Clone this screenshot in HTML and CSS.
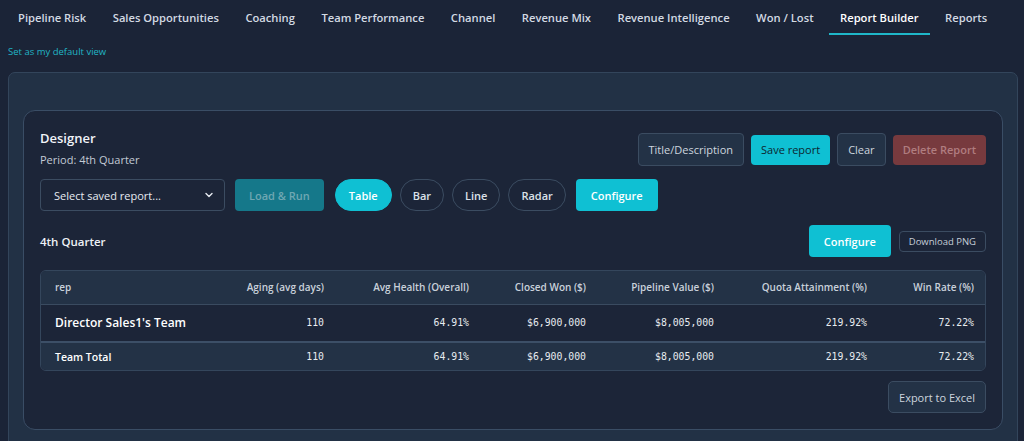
FILE: index.html
```html
<!DOCTYPE html>
<html lang="en">
<head>
    <meta charset="UTF-8">
    <meta name="viewport" content="width=device-width, initial-scale=1.0">
    <title>Report Builder</title>
    <link rel="stylesheet" href="styles.css">
</head>
<body>
    <!-- Top tabs -->
    <nav class="tabs">
        <a href="#" class="tab">Pipeline Risk</a>
        <a href="#" class="tab">Sales Opportunities</a>
        <a href="#" class="tab">Coaching</a>
        <a href="#" class="tab">Team Performance</a>
        <a href="#" class="tab">Channel</a>
        <a href="#" class="tab">Revenue Mix</a>
        <a href="#" class="tab">Revenue Intelligence</a>
        <a href="#" class="tab">Won / Lost</a>
        <a href="#" class="tab active">Report Builder</a>
        <a href="#" class="tab">Reports</a>
    </nav>

    <a href="#" class="default-link">Set as my default view</a>

    <div class="panel">
        <div class="designer">
            <!-- Header -->
            <div class="designer-head">
                <div>
                    <h2 class="designer-title">Designer</h2>
                    <p class="period">Period: 4th Quarter</p>
                </div>
                <div class="head-actions">
                    <button class="btn btn-ghost btn-tall">Title/Description</button>
                    <button class="btn btn-teal btn-dark-text">Save report</button>
                    <button class="btn btn-ghost btn-tall">Clear</button>
                    <button class="btn btn-danger">Delete Report</button>
                </div>
            </div>

            <!-- Toolbar -->
            <div class="toolbar">
                <div class="select">
                    <span>Select saved report...</span>
                    <svg width="10" height="10" viewBox="0 0 10 10"><path d="M2 3.5 L5 6.5 L8 3.5" fill="none" stroke="#e6ebf1" stroke-width="1.4" stroke-linecap="round" stroke-linejoin="round"/></svg>
                </div>
                <button class="btn btn-disabled">Load &amp; Run</button>
                <button class="pill active">Table</button>
                <button class="pill">Bar</button>
                <button class="pill">Line</button>
                <button class="pill">Radar</button>
                <button class="btn btn-teal">Configure</button>
            </div>

            <!-- Report -->
            <div class="report-head">
                <h3 class="report-title">4th Quarter</h3>
                <div class="report-actions">
                    <button class="btn btn-teal">Configure</button>
                    <button class="btn btn-small">Download PNG</button>
                </div>
            </div>

            <div class="table-wrap">
                <table class="report-table">
                    <colgroup>
                        <col style="width:170px">
                        <col style="width:127px">
                        <col style="width:145px">
                        <col style="width:117px">
                        <col style="width:128px">
                        <col style="width:153px">
                        <col style="width:107px">
                    </colgroup>
                    <thead>
                        <tr>
                            <th class="left">rep</th>
                            <th>Aging (avg days)</th>
                            <th>Avg Health (Overall)</th>
                            <th>Closed Won ($)</th>
                            <th>Pipeline Value ($)</th>
                            <th>Quota Attainment (%)</th>
                            <th>Win Rate (%)</th>
                        </tr>
                    </thead>
                    <tbody>
                        <tr class="data-row">
                            <td class="name">Director Sales1's Team</td>
                            <td>110</td>
                            <td>64.91%</td>
                            <td>$6,900,000</td>
                            <td>$8,005,000</td>
                            <td>219.92%</td>
                            <td>72.22%</td>
                        </tr>
                        <tr class="total-row">
                            <td class="name">Team Total</td>
                            <td>110</td>
                            <td>64.91%</td>
                            <td>$6,900,000</td>
                            <td>$8,005,000</td>
                            <td>219.92%</td>
                            <td>72.22%</td>
                        </tr>
                    </tbody>
                </table>
            </div>

            <div class="footer-actions">
                <button class="btn btn-ghost btn-export">Export to Excel</button>
            </div>
        </div>
    </div>
</body>
</html>
```

FILE: styles.css
```css
/* Basic reset */
* {
    margin: 0;
    padding: 0;
    box-sizing: border-box;
}

body {
    font-family: 'Open Sans', 'Noto Sans', sans-serif;
    background-color: #1b2437;
    color: #e6ebf1;
    height: 441px;
    overflow: hidden;
}

/* Tabs */
.tabs {
    display: flex;
    gap: 4.5px;
    padding-left: 7px;
    height: 35px;
}

.tab {
    flex: none;
    white-space: nowrap;
    color: #d3dae3;
    text-decoration: none;
    font-size: 11.2px;
    font-weight: 600;
    padding: 10px 11px 0;
    height: 35px;
    border-bottom: 2px solid transparent;
}

.tab.active {
    color: #ffffff;
    border-bottom-color: #1fb7c9;
}

.default-link {
    display: block;
    margin: 10px 0 0 8px;
    font-size: 9.5px;
    line-height: 14px;
    color: #21b5c6;
    text-decoration: none;
}

/* Outer panel */
.panel {
    margin: 13px 6px 0 8px;
    background-color: #223145;
    border: 1px solid #33455b;
    border-radius: 7px;
    padding: 37px 14px 20px 14px;
}

.designer {
    background-color: #1c2538;
    border: 1px solid #3a4d65;
    border-radius: 12px;
    padding: 19px 16px 16px 16px;
}

.designer-head {
    display: flex;
    justify-content: space-between;
    align-items: flex-start;
}

.designer-title {
    font-size: 13px;
    font-weight: 600;
    color: #f1f4f8;
    line-height: 17px;
}

.period {
    font-size: 11px;
    color: #c2cad5;
    margin-top: 5px;
    line-height: 15px;
}

.head-actions {
    display: flex;
    align-items: center;
    gap: 7px;
    margin-top: 3px;
}

/* Buttons */
.btn {
    flex: none;
    white-space: nowrap;
    font-family: inherit;
    font-size: 11px;
    height: 30px;
    padding: 0 10px;
    border: none;
    border-radius: 4px;
    cursor: pointer;
}

.btn-ghost {
    background-color: #233246;
    border: 1px solid #3b4c61;
    color: #cdd5df;
}

.btn-tall {
    height: 33px;
}

.btn-teal {
    background-color: #0fc0d3;
    color: #ffffff;
    font-weight: 600;
    height: 32px;
}

.btn-dark-text {
    color: #0d2630;
    font-weight: 500;
    height: 30px;
}

.btn-danger {
    background-color: #773a3e;
    color: #b07d80;
    font-weight: 600;
}

.btn-disabled {
    background-color: #15788a;
    color: #6fa7b2;
    font-weight: 600;
    height: 32px;
    padding: 0 14px;
}

.btn-small {
    background-color: transparent;
    border: 1px solid #3b4c61;
    color: #c6ced8;
    font-size: 9.5px;
    height: 21px;
    padding: 0 9px;
}

.btn-export {
    height: 32px;
    font-size: 11px;
    border-radius: 5px;
}

/* Toolbar */
.toolbar {
    display: flex;
    align-items: center;
    margin-top: 12px;
    gap: 8px;
}

.select {
    width: 185px;
    height: 32px;
    border: 1px solid #3b4c61;
    border-radius: 4px;
    display: flex;
    align-items: center;
    justify-content: space-between;
    padding: 0 10px 0 13px;
    font-size: 11px;
    color: #e6ebf1;
    margin-right: 2px;
}

.pill {
    flex: none;
    font-family: inherit;
    font-size: 11px;
    font-weight: 600;
    height: 32px;
    padding: 0 12px;
    border-radius: 16px;
    background-color: transparent;
    border: 1px solid #3b4c61;
    color: #dbe1e8;
    cursor: pointer;
}

.pill.active {
    background-color: #0fc0d3;
    border-color: #0fc0d3;
    color: #ffffff;
    padding: 0 13px;
}

.toolbar .btn-disabled {
    margin-right: 3px;
}

.toolbar .btn-teal {
    margin-left: 2px;
    padding: 0 15px;
}

/* Report */
.report-head {
    display: flex;
    justify-content: space-between;
    align-items: center;
    margin-top: 14px;
}

.report-title {
    font-size: 11.5px;
    font-weight: 600;
    color: #eef2f6;
}

.report-actions {
    display: flex;
    align-items: center;
    gap: 8px;
}

.report-actions .btn-teal {
    padding: 0 15px;
}

.table-wrap {
    margin-top: 13px;
    border: 1px solid #34465c;
    border-radius: 6px;
    overflow: hidden;
}

.report-table {
    width: 100%;
    border-collapse: collapse;
    table-layout: fixed;
}

.report-table th {
    background-color: #233246;
    font-size: 10px;
    font-weight: 600;
    color: #c9d1db;
    text-align: right;
    padding: 0 14px;
    height: 33px;
    border-bottom: 1px solid #3a4b60;
    white-space: nowrap;
}

.report-table th.left {
    text-align: left;
}

.report-table td {
    font-family: 'DejaVu Sans Mono', monospace;
    font-size: 9.8px;
    color: #e8ecf0;
    text-align: right;
    padding: 0 14px;
}

.data-row td {
    height: 38px;
    background-color: #1c2538;
    border-bottom: 2px solid #3c4f67;
}

.total-row td {
    height: 28px;
    background-color: #233246;
}

.report-table td.name {
    font-family: 'Open Sans', 'Noto Sans', sans-serif;
    text-align: left;
    color: #ffffff;
    font-weight: 600;
}

.data-row td.name {
    font-size: 12px;
}

.total-row td.name {
    font-size: 10.5px;
}

.footer-actions {
    display: flex;
    justify-content: flex-end;
    margin-top: 10px;
}
```
